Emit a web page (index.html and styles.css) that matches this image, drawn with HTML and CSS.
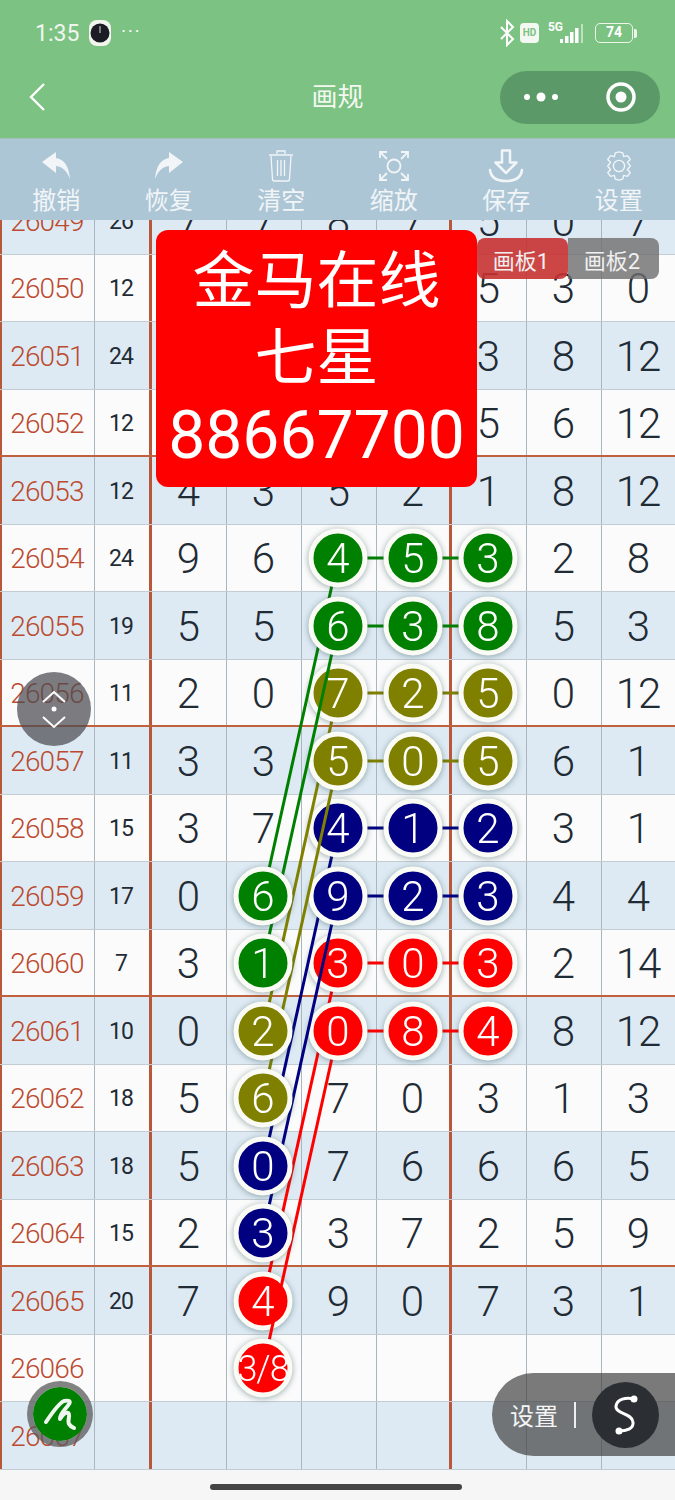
FILE: index.html
```html
<!DOCTYPE html>
<html>
<head>
	<meta charset="utf-8">
	<title>画规</title>
	<link rel="stylesheet" href="styles.css">
</head>
<body>
<div class="page">
	<div class="header">
		<div class="status">
			<span class="time">1:35</span>
			<svg class="watch" width="24" height="28" viewBox="0 0 24 28"><rect x="1" y="1" width="22" height="26" rx="8" fill="#f2f4ee"/><circle cx="12" cy="14" r="9.5" fill="#1c1c24"/><path d="M12 14V7" stroke="#ddd" stroke-width="1"/></svg>
			<span class="more">···</span>
			<div class="status-right">
				<svg width="16" height="28" viewBox="0 0 16 28"><path d="M2 8l12 12-6 6V2l6 6L2 20" fill="none" stroke="#fff" stroke-width="2"/></svg>
				<span class="hd">HD</span>
				<span class="net">5G</span>
				<svg width="24" height="22" viewBox="0 0 24 22"><path d="M0 17h3v4H0zM5 14h3.500v7H5zM10 10h3.500v11H10zM15 6h3.500v15H15z" fill="#fff"/><path d="M21 2h2v19h-2z" fill="#fff" opacity=".5"/></svg>
				<span class="battery">74</span>
				<span class="battery-cap"></span>
			</div>
		</div>
		<div class="nav">
			<svg class="back" width="18" height="28" viewBox="0 0 18 28"><path d="M16 1L3 14l13 13" fill="none" stroke="#fff" stroke-width="2.4"/></svg>
			<div class="title">画规</div>
			<div class="capsule">
				<svg width="36" height="12" viewBox="0 0 36 12"><circle cx="4" cy="6" r="3" fill="#fff"/><circle cx="18" cy="6" r="4.5" fill="#fff"/><circle cx="32" cy="6" r="3" fill="#fff"/></svg>
				<svg width="32" height="32" viewBox="0 0 32 32"><circle cx="16" cy="16" r="13" fill="none" stroke="#fff" stroke-width="3.5"/><circle cx="16" cy="16" r="5.5" fill="#fff"/></svg>
			</div>
		</div>
	</div>

	<div class="toolbar">
		<div class="tool">
			<svg width="30" height="34" viewBox="0 0 30 34"><path d="M1 13L15 3v6c8 1 13 8 14 21-3-8-7-12-14-13v7z" fill="#f1f5f7"/></svg>
			<span>撤销</span>
		</div>
		<div class="tool">
			<svg width="30" height="34" viewBox="0 0 30 34"><path d="M29 13L15 3v6C7 10 2 17 1 30c3-8 7-12 14-13v7z" fill="#f1f5f7"/></svg>
			<span>恢复</span>
		</div>
		<div class="tool">
			<svg width="30" height="34" viewBox="0 0 30 34"><path d="M3 6h24M11 5V2h8v3M5 7l1.500 23a2 2 0 0 0 2 2h13a2 2 0 0 0 2-2L25 7M11.500 11v16M15 11v16M18.500 11v16" fill="none" stroke="#f1f5f7" stroke-width="1.300"/></svg>
			<span>清空</span>
		</div>
		<div class="tool">
			<svg width="30" height="34" viewBox="0 0 30 34"><circle cx="15" cy="17" r="6.500" fill="none" stroke="#f1f5f7" stroke-width="1.800"/><path d="M1 9V3h7M22 3h7v6M1 25v6h7M22 31h7v-6M2 4l6 6M28 4l-6 6M2 30l6-6M28 30l-6-6" fill="none" stroke="#f1f5f7" stroke-width="1.800"/></svg>
			<span>缩放</span>
		</div>
		<div class="tool">
			<svg width="36" height="34" viewBox="0 0 36 34"><path d="M14 1.500h8v12h6.500L18 24 7.500 13.500H14z" fill="none" stroke="#f1f5f7" stroke-width="2.500" stroke-linejoin="round"/><path d="M2 21c1 8 7 11 16 11s15-3 16-11" fill="none" stroke="#f1f5f7" stroke-width="2.500" stroke-linecap="round"/></svg>
			<span>保存</span>
		</div>
		<div class="tool">
			<svg width="30" height="34" viewBox="0 0 32 36"><path d="M16 3l4 1 1 4 4-1 3 4-3 3 3 4-3 4 3 3-3 4-4-1-1 4-4 1-4-1-1-4-4 1-3-4 3-3-3-4 3-4-3-3 3-4 4 1 1-4z" fill="none" stroke="#f1f5f7" stroke-width="1.500" stroke-linejoin="round"/><circle cx="16" cy="18" r="6" fill="none" stroke="#f1f5f7" stroke-width="1.500"/></svg>
			<span>设置</span>
		</div>
	</div>

	<div class="board">
		<div class="rows">
			<div class="row blue"><b>26049</b><i>26</i><u>7</u><u>7</u><u>8</u><u>7</u><u>5</u><u>0</u><u>7</u></div>
			<div class="row"><b>26050</b><i>12</i><u></u><u></u><u></u><u></u><u>5</u><u>3</u><u>0</u></div>
			<div class="row blue"><b>26051</b><i>24</i><u></u><u></u><u></u><u></u><u>3</u><u>8</u><u>12</u></div>
			<div class="row end"><b>26052</b><i>12</i><u></u><u></u><u></u><u></u><u>5</u><u>6</u><u>12</u></div>
			<div class="row blue"><b>26053</b><i>12</i><u>4</u><u>3</u><u>5</u><u>2</u><u>1</u><u>8</u><u>12</u></div>
			<div class="row"><b>26054</b><i>24</i><u>9</u><u>6</u><u></u><u></u><u></u><u>2</u><u>8</u></div>
			<div class="row blue"><b>26055</b><i>19</i><u>5</u><u>5</u><u></u><u></u><u></u><u>5</u><u>3</u></div>
			<div class="row end"><b>26056</b><i>11</i><u>2</u><u>0</u><u></u><u></u><u></u><u>0</u><u>12</u></div>
			<div class="row blue"><b>26057</b><i>11</i><u>3</u><u>3</u><u></u><u></u><u></u><u>6</u><u>1</u></div>
			<div class="row"><b>26058</b><i>15</i><u>3</u><u>7</u><u></u><u></u><u></u><u>3</u><u>1</u></div>
			<div class="row blue"><b>26059</b><i>17</i><u>0</u><u></u><u></u><u></u><u></u><u>4</u><u>4</u></div>
			<div class="row end"><b>26060</b><i>7</i><u>3</u><u></u><u></u><u></u><u></u><u>2</u><u>14</u></div>
			<div class="row blue"><b>26061</b><i>10</i><u>0</u><u></u><u></u><u></u><u></u><u>8</u><u>12</u></div>
			<div class="row"><b>26062</b><i>18</i><u>5</u><u></u><u>7</u><u>0</u><u>3</u><u>1</u><u>3</u></div>
			<div class="row blue"><b>26063</b><i>18</i><u>5</u><u></u><u>7</u><u>6</u><u>6</u><u>6</u><u>5</u></div>
			<div class="row end"><b>26064</b><i>15</i><u>2</u><u></u><u>3</u><u>7</u><u>2</u><u>5</u><u>9</u></div>
			<div class="row blue"><b>26065</b><i>20</i><u>7</u><u></u><u>9</u><u>0</u><u>7</u><u>3</u><u>1</u></div>
			<div class="row"><b>26066</b><i></i><u></u><u></u><u></u><u></u><u></u><u></u><u></u></div>
			<div class="row blue"><b>26067</b><i></i><u></u><u></u><u></u><u></u><u></u><u></u><u></u></div>
		</div>

		<!-- viewBox uses page coordinates, drawn bottom group first so the upper groups sit on top -->
		<svg class="overlay" width="675" height="1250" viewBox="0 220 675 1250">
			<g class="red">
				<line x1="338" y1="963" x2="488" y2="963"/><line x1="338" y1="1031" x2="488" y2="1031"/>
				<line x1="338" y1="963" x2="263" y2="1301"/>
				<g class="ball"><circle cx="263" cy="1301" r="27"/><text x="263" y="1316">4</text></g>
				<line x1="338" y1="1031" x2="263" y2="1368"/>
				<g class="ball"><circle cx="263" cy="1368" r="27"/><text class="small" x="263" y="1381">3/8</text></g>
				<g class="ball"><circle cx="338" cy="963" r="27"/><text x="338" y="978">3</text></g>
				<g class="ball"><circle cx="413" cy="963" r="27"/><text x="413" y="978">0</text></g>
				<g class="ball"><circle cx="488" cy="963" r="27"/><text x="488" y="978">3</text></g>
				<g class="ball"><circle cx="338" cy="1031" r="27"/><text x="338" y="1046">0</text></g>
				<g class="ball"><circle cx="413" cy="1031" r="27"/><text x="413" y="1046">8</text></g>
				<g class="ball"><circle cx="488" cy="1031" r="27"/><text x="488" y="1046">4</text></g>
			</g>
			<g class="navy">
				<line x1="338" y1="828" x2="488" y2="828"/><line x1="338" y1="896" x2="488" y2="896"/>
				<line x1="338" y1="828" x2="263" y2="1166"/><line x1="338" y1="896" x2="263" y2="1233"/>
				<g class="ball"><circle cx="263" cy="1166" r="27"/><text x="263" y="1181">0</text></g>
				<g class="ball"><circle cx="263" cy="1233" r="27"/><text x="263" y="1248">3</text></g>
				<g class="ball"><circle cx="338" cy="828" r="27"/><text x="338" y="843">4</text></g>
				<g class="ball"><circle cx="413" cy="828" r="27"/><text x="413" y="843">1</text></g>
				<g class="ball"><circle cx="488" cy="828" r="27"/><text x="488" y="843">2</text></g>
				<g class="ball"><circle cx="338" cy="896" r="27"/><text x="338" y="911">9</text></g>
				<g class="ball"><circle cx="413" cy="896" r="27"/><text x="413" y="911">2</text></g>
				<g class="ball"><circle cx="488" cy="896" r="27"/><text x="488" y="911">3</text></g>
			</g>
			<g class="olive">
				<line x1="338" y1="693" x2="488" y2="693"/><line x1="338" y1="761" x2="488" y2="761"/>
				<line x1="338" y1="693" x2="263" y2="1031"/><line x1="338" y1="761" x2="263" y2="1098"/>
				<g class="ball"><circle cx="263" cy="1031" r="27"/><text x="263" y="1046">2</text></g>
				<g class="ball"><circle cx="263" cy="1098" r="27"/><text x="263" y="1113">6</text></g>
				<g class="ball"><circle cx="338" cy="693" r="27"/><text x="338" y="708">7</text></g>
				<g class="ball"><circle cx="413" cy="693" r="27"/><text x="413" y="708">2</text></g>
				<g class="ball"><circle cx="488" cy="693" r="27"/><text x="488" y="708">5</text></g>
				<g class="ball"><circle cx="338" cy="761" r="27"/><text x="338" y="776">5</text></g>
				<g class="ball"><circle cx="413" cy="761" r="27"/><text x="413" y="776">0</text></g>
				<g class="ball"><circle cx="488" cy="761" r="27"/><text x="488" y="776">5</text></g>
			</g>
			<g class="green">
				<line x1="338" y1="558" x2="488" y2="558"/><line x1="338" y1="626" x2="488" y2="626"/>
				<line x1="338" y1="558" x2="263" y2="896"/><line x1="338" y1="626" x2="263" y2="963"/>
				<g class="ball"><circle cx="263" cy="896" r="27"/><text x="263" y="911">6</text></g>
				<g class="ball"><circle cx="263" cy="963" r="27"/><text x="263" y="978">1</text></g>
				<g class="ball"><circle cx="338" cy="558" r="27"/><text x="338" y="573">4</text></g>
				<g class="ball"><circle cx="413" cy="558" r="27"/><text x="413" y="573">5</text></g>
				<g class="ball"><circle cx="488" cy="558" r="27"/><text x="488" y="573">3</text></g>
				<g class="ball"><circle cx="338" cy="626" r="27"/><text x="338" y="641">6</text></g>
				<g class="ball"><circle cx="413" cy="626" r="27"/><text x="413" y="641">3</text></g>
				<g class="ball"><circle cx="488" cy="626" r="27"/><text x="488" y="641">8</text></g>
			</g>
		</svg>
	</div>

	<div class="footer"><div class="home-bar"></div></div>

	<div class="banner">
		<div>金马在线</div>
		<div>七星</div>
		<div class="digits">88667700</div>
	</div>
	<div class="tabs">
		<span class="tab active">画板1</span>
		<span class="tab">画板2</span>
	</div>
	<div class="scroller">
		<svg width="36" height="64" viewBox="0 0 36 64"><path d="M7 25l11-10 11 10M7 40l11 10 11-10" fill="none" stroke="#fff" stroke-width="2"/><circle cx="18" cy="32" r="2.500" fill="#fff"/></svg>
	</div>
	<div class="pen">
		<svg width="42" height="42" viewBox="0 0 42 42"><path d="M7 29C13 20 20 10 25 8c5-1 7 0 5 3-3 5-9 9-9 15 2-3 5-7 8-6 3 1-1 8 1 11 1 2 3 3 5 4" fill="none" stroke="#eef6ee" stroke-width="4" stroke-linecap="round" stroke-linejoin="round"/></svg>
	</div>
	<div class="settings">
		<span>设置</span>
		<span class="divider"></span>
		<div class="s-button">
			<svg width="32" height="46" viewBox="0 0 32 46"><path d="M24 7C16 5 7 7 6 14 5 22 22 21 23 30 24 37 16 39 9 39" fill="none" stroke="#fff" stroke-width="3"/><circle cx="24" cy="7" r="3.500" fill="#fff"/><circle cx="9" cy="39" r="3.500" fill="#fff"/></svg>
		</div>
	</div>
</div>
</body>
</html>
```

FILE: styles.css
```css
*{
	padding: 0;
	margin: 0;
	box-sizing: border-box;
}
body{
	font-family: "Roboto", "Noto Sans CJK SC", sans-serif;
	background-color: #f6f6f6;
}
.page{
	position: relative;
	width: 675px;
	height: 1500px;
	overflow: hidden;
}

/* top green area */
.header{
	background-color: #7cc283;
	height: 138px;
	color: #fff;
}
.status{
	display: flex;
	align-items: center;
	height: 66px;
	padding: 0 38px 0 35px;
}
.time{
	font-size: 23px;
	color: #f0f6ee;
}
.watch{
	margin-left: 9px;
}
.more{
	margin-left: 9px;
	font-size: 18px;
	letter-spacing: 2px;
	margin-top: -4px;
}
.status-right{
	margin-left: auto;
	display: flex;
	align-items: center;
	gap: 3px;
}
.hd{
	background-color: #f4f8f2;
	color: #7cc283;
	font-size: 10px;
	font-weight: bold;
	border-radius: 4px;
	width: 19px;
	height: 20px;
	line-height: 20px;
	text-align: center;
	margin-left: 2px;
}
.net{
	font-size: 12px;
	font-weight: bold;
	margin: -12px -6px 0 6px;
}
.battery{
	margin-left: 8px;
	width: 38px;
	height: 20px;
	line-height: 17px;
	border: 1.5px solid #eef6ec;
	border-radius: 5px;
	font-size: 14px;
	font-weight: bold;
	text-align: center;
}
.battery-cap{
	width: 3px;
	height: 9px;
	margin-left: -2px;
	background-color: #eef6ec;
	border-radius: 0 2px 2px 0;
}
.nav{
	display: grid;
	grid-template-columns: 1fr auto 1fr;
	align-items: center;
	height: 62px;
	padding: 0 15px;
}
.back{
	margin-left: 13px;
}
.title{
	font-size: 26px;
	line-height: 36px;
	color: #f2f8f0;
}
.capsule{
	justify-self: end;
	display: flex;
	align-items: center;
	justify-content: space-between;
	width: 160px;
	height: 53px;
	padding: 0 23px;
	background-color: #5b9a68;
	border-radius: 27px;
}

/* tool row */
.toolbar{
	display: grid;
	grid-template-columns: repeat(6, 112.5px);
	height: 82px;
	background-color: #adc6d6;
	border-top: 1px solid #a2c2b8;
}
.tool{
	display: flex;
	flex-direction: column;
	align-items: center;
	padding-top: 10px;
	color: #f1f5f7;
	font-size: 24px;
	line-height: 36px;
}

/* number table */
.board{
	position: relative;
	height: 1250px;
	overflow: hidden;
	background-color: #fbfbfb;
}
.rows{
	margin-top: -33px;
}
.row{
	display: grid;
	grid-template-columns: 95px 57px repeat(7, 75px);
	height: 67.5px;
	background-color: #fbfbfb;
	border-bottom: 1.5px solid #c2ccd2;
	color: #1f2b35;
	align-items: stretch;
	text-align: center;
}
.blue{
	background-color: #deeaf3;
}
.end{
	border-bottom: 2.5px solid #c0603c;
}
.row b, .row i, .row u{
	display: flex;
	align-items: center;
	justify-content: center;
	padding: 2px 2px 0 0;
	font-weight: 300;
	font-style: normal;
	text-decoration: none;
	border-right: 1.5px solid #aab6bd;
}
.row b{
	font-size: 28px;
	letter-spacing: -0.8px;
	color: #bb4a30;
	border-left: 2.5px solid #b9573a;
}
.row i{
	font-size: 23px;
	font-weight: 400;
	letter-spacing: -1px;
	border-right: 3.5px solid #b9573a;
}
.row u{
	font-size: 42px;
	letter-spacing: -1px;
}
.row u:nth-child(6){
	border-right: 3.5px solid #b9573a;
}
.overlay{
	position: absolute;
	top: 0;
	left: 0;
}
.overlay line{
	stroke-width: 3;
}
.overlay text{
	font-size: 42px;
	font-weight: 300;
	fill: #fff;
	text-anchor: middle;
}
.overlay text.small{
	font-size: 36px;
	letter-spacing: -1px;
}
.ball{
	filter: drop-shadow(0 1px 3px rgba(30, 70, 80, 0.45));
}
.ball circle{
	stroke: #fbfbf6;
	stroke-width: 5;
}
.green line{ stroke: #008000; }
.green circle{ fill: #008000; }
.olive line{ stroke: #808000; }
.olive circle{ fill: #808000; }
.navy line{ stroke: #000080; }
.navy circle{ fill: #000080; }
.red line{ stroke: #ff0000; }
.red circle{ fill: #ff0000; }

.footer{
	height: 30px;
	background-color: #f6f6f6;
	padding-top: 14px;
}
.home-bar{
	width: 252px;
	height: 6px;
	margin-left: 210px;
	background-color: #444;
	border-radius: 3px;
}

/* floating things */
.banner{
	position: absolute;
	top: 230px;
	left: 156px;
	width: 321px;
	height: 257px;
	background-color: #ff0000;
	border-radius: 12px;
	color: #fff;
	font-size: 62px;
	line-height: 77px;
	text-align: center;
	padding-top: 13px;
}
.banner .digits{
	font-size: 66px;
}
.tabs{
	position: absolute;
	top: 238px;
	left: 477px;
	display: flex;
	width: 182px;
	height: 41px;
	font-size: 22px;
	line-height: 47px;
	color: #f0f0f0;
	text-align: center;
}
.tab{
	flex: 1;
	padding-right: 3px;
	background-color: rgba(110, 110, 110, 0.8);
	border-radius: 0 8px 8px 0;
}
.tab.active{
	background-color: rgba(200, 50, 50, 0.9);
	border-radius: 8px;
}
.scroller{
	position: absolute;
	top: 672px;
	left: 17px;
	width: 74px;
	height: 74px;
	border-radius: 50%;
	background-color: rgba(75, 75, 80, 0.72);
	display: flex;
	align-items: center;
	justify-content: center;
}
.pen{
	position: absolute;
	top: 1381px;
	left: 27px;
	width: 66px;
	height: 66px;
	border-radius: 50%;
	background-color: #008000;
	background-clip: padding-box;
	border: 6px solid rgba(90, 90, 90, 0.75);
	display: flex;
	align-items: center;
	justify-content: center;
}
.settings{
	position: absolute;
	top: 1373px;
	left: 492px;
	width: 183px;
	height: 83px;
	padding-left: 18px;
	display: flex;
	align-items: center;
	background-color: rgba(60, 60, 60, 0.68);
	border-radius: 42px 0 0 42px;
	color: #f4f4f4;
	font-size: 24px;
}
.divider{
	width: 2px;
	height: 26px;
	margin: 0 16px;
	background-color: #eee;
}
.s-button{
	width: 67px;
	height: 66px;
	border-radius: 50%;
	background-color: #2b2f33;
	display: flex;
	align-items: center;
	justify-content: center;
}
```
